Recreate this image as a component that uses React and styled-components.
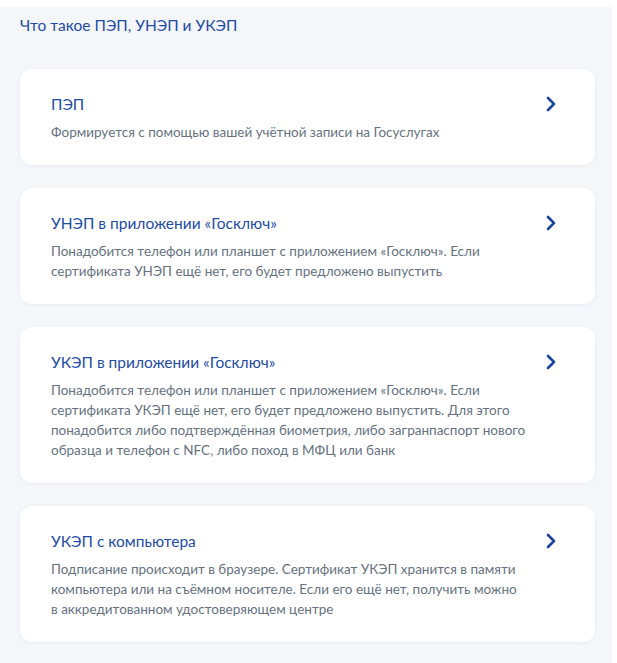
import React from 'react'
import styled, { createGlobalStyle } from 'styled-components'

const GlobalStyle = createGlobalStyle`
    html, body {
        margin: 0;
        padding: 0;
        background: #ffffff;
        font-family: Lato, "Noto Sans", sans-serif;
    }
`;

const Page = styled.div`
    margin-top: 7px;
    width: 612px;
    height: 656px;
    background: #f4f6fa;
    padding: 6px 17px 0 20px;
    box-sizing: border-box;
`;

const Heading = styled.h3`
    margin: 0 0 32px;
    font-size: 15.5px;
    line-height: 24px;
    font-weight: 400;
    color: #1e4ca6;
`;

const List = styled.div`
    display: flex;
    flex-direction: column;
    gap: 23px;
`;

const Card = styled.a`
    display: flex;
    align-items: flex-start;
    justify-content: space-between;
    padding: 23px 38px 23px 31px;
    background: #ffffff;
    border-radius: 12px;
    box-shadow: 0 1px 4px rgba(30, 50, 90, 0.06);
    text-decoration: none;
    cursor: pointer;
`;

const Body = styled.div`
    max-width: 475px;
`;

const Title = styled.div`
    font-size: 15.5px;
    line-height: 24px;
    color: #1e4ca6;
    margin-bottom: 6px;
`;

const Text = styled.p`
    margin: 0;
    font-size: 13.5px;
    line-height: 20px;
    color: #66727f;
`;

const Arrow = styled.svg`
    flex-shrink: 0;
    margin-top: 4px;
`;

const items = [
    {
        title: 'ПЭП',
        text: 'Формируется с помощью вашей учётной записи на Госуслугах',
    },
    {
        title: 'УНЭП в приложении «Госключ»',
        text: 'Понадобится телефон или планшет с приложением «Госключ». Если сертификата УНЭП ещё нет, его будет предложено выпустить',
    },
    {
        title: 'УКЭП в приложении «Госключ»',
        text: 'Понадобится телефон или планшет с приложением «Госключ». Если сертификата УКЭП ещё нет, его будет предложено выпустить. Для этого понадобится либо подтверждённая биометрия, либо загранпаспорт нового образца и телефон с NFC, либо поход в МФЦ или банк',
    },
    {
        title: 'УКЭП с компьютера',
        text: 'Подписание происходит в браузере. Сертификат УКЭП хранится в памяти компьютера или на съёмном носителе. Если его ещё нет, получить можно в аккредитованном удостоверяющем центре',
    },
];

function App() {
    return (
        <>
            <GlobalStyle />
            <Page>
                <Heading>Что такое ПЭП, УНЭП и УКЭП</Heading>
                <List>
                    {items.map((item) => (
                        <Card key={item.title}>
                            <Body>
                                <Title>{item.title}</Title>
                                <Text>{item.text}</Text>
                            </Body>
                            <Arrow width="12" height="16" viewBox="0 0 12 16">
                                <polyline
                                    points="3,2 9,8 3,14"
                                    fill="none"
                                    stroke="#1a44a0"
                                    strokeWidth="2.6"
                                    strokeLinecap="round"
                                    strokeLinejoin="round"
                                />
                            </Arrow>
                        </Card>
                    ))}
                </List>
            </Page>
        </>
    )
}

export default App
